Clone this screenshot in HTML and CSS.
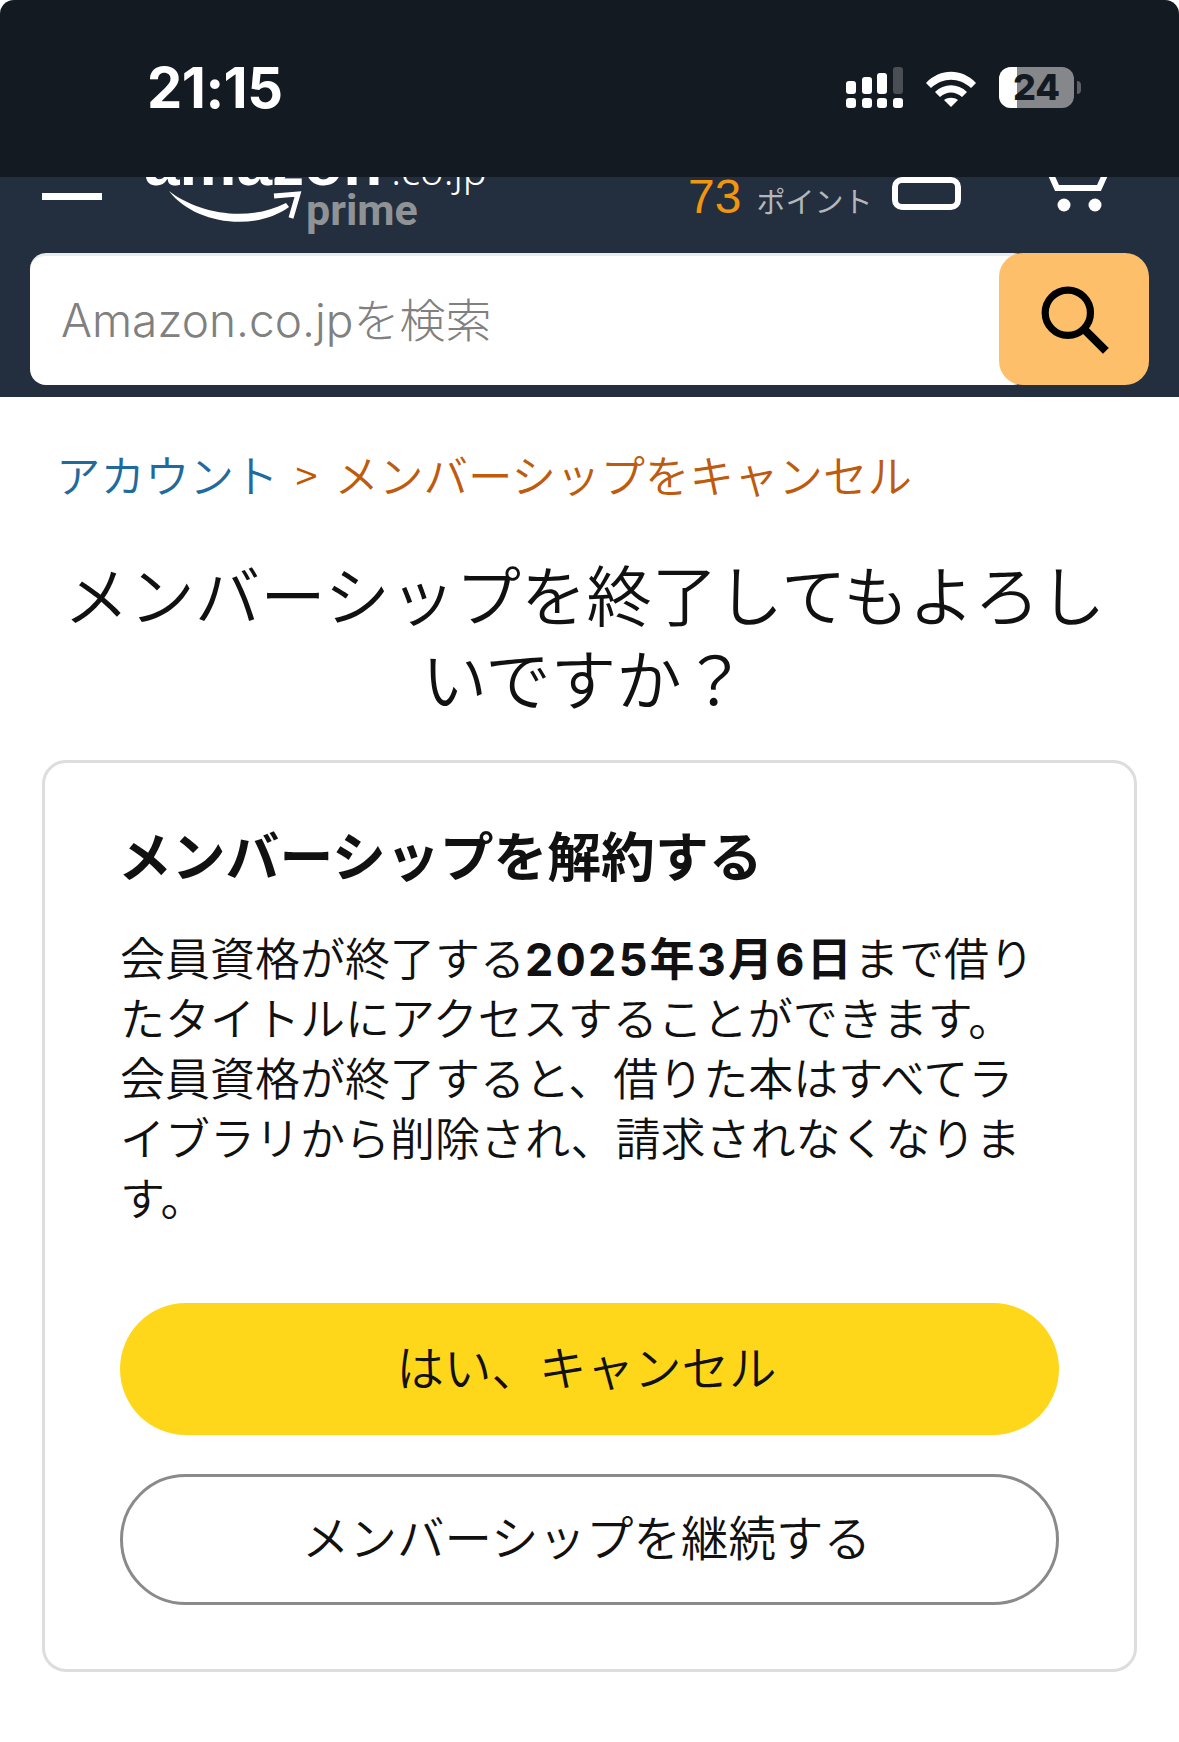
FILE: index.html
```html
<!DOCTYPE html>
<html lang="ja">
<head>
<meta charset="utf-8">
<title>メンバーシップを終了</title>
<link rel="stylesheet" href="styles.css">
</head>
<body>
<div class="status">
  <span class="time">21:15</span>
  <div class="status-icons">
    <svg class="signal" width="57" height="41" viewBox="0 0 57 41">
      <g fill="#fff">
        <rect x="0" y="14" width="10" height="13" rx="3"/><rect x="16" y="10" width="10" height="17" rx="3"/><rect x="31" y="6" width="10" height="21" rx="3"/>
        <rect x="0" y="31" width="10" height="10" rx="3"/><rect x="16" y="31" width="10" height="10" rx="3"/><rect x="31" y="31" width="10" height="10" rx="3"/><rect x="47" y="31" width="10" height="10" rx="3"/>
      </g>
      <rect x="47" y="0" width="10" height="27" rx="3" fill="#4a4e55"/>
    </svg>
    <svg class="wifi" width="50" height="36" viewBox="0 0 50 36">
      <path d="M0 12 C14 -3 36 -3 50 12 L45 17 C33 6 17 6 5 17 Z" fill="#fff"/>
      <path d="M9 21 C18 12 32 12 41 21 L36 26 C29 20 21 20 14 26 Z" fill="#fff"/>
      <path d="M18 29 C22 26 28 26 32 29 L25 36 Z" fill="#fff"/>
    </svg>
    <div class="battery">
      <div class="battery-body"><span class="battery-level"></span><span class="battery-text">24</span></div>
      <span class="battery-nub"></span>
    </div>
  </div>
</div>
<header class="nav">
  <div class="nav-top">
    <span class="burger"></span>
    <div class="logo">
      <div class="logo-word"><span class="logo-amazon">amazon</span><span class="logo-tld">.co.jp</span></div>
      <div class="logo-lower">
        <svg class="smile" width="133" height="36" viewBox="0 0 133 36">
          <path d="M0 2 C28 24 78 34 117 14 L120 18 C84 44 24 34 0 2 Z" fill="#fff"/>
          <path d="M105 7 L129 5 L122 29" fill="none" stroke="#fff" stroke-width="5"/>
        </svg>
        <span class="logo-prime">prime</span>
      </div>
    </div>
    <div class="points"><span class="points-num">73</span><span class="points-label">ポイント</span></div>
    <span class="device"></span>
    <svg class="cart" width="62" height="36" viewBox="0 0 62 36">
      <path d="M1 -8 L10 12 L52 12 L61 -8" fill="none" stroke="#fff" stroke-width="6"/>
      <circle cx="17" cy="29" r="6.5" fill="#fff"/><circle cx="48" cy="29" r="6.5" fill="#fff"/>
    </svg>
  </div>
  <div class="search">
    <div class="search-field"><span class="search-hint">Amazon.co.jpを検索</span></div>
    <div class="search-btn">
      <svg width="72" height="72" viewBox="0 0 70 70">
        <circle cx="29" cy="29" r="22" fill="none" stroke="#000" stroke-width="7"/>
        <path d="M45 45 L66 66" stroke="#000" stroke-width="8" fill="none"/>
      </svg>
    </div>
  </div>
</header>
<main class="page">
  <div class="crumbs"><span class="crumb-link">アカウント</span><span class="crumb-sep">&gt;</span><span class="crumb-now">メンバーシップをキャンセル</span></div>
  <h1 class="title">メンバーシップを終了してもよろしいですか？</h1>
  <section class="card">
    <h2 class="card-title">メンバーシップを解約する</h2>
    <p class="card-text">会員資格が終了する<b>2025年3月6日</b>まで借りたタイトルにアクセスすることができます。<br>会員資格が終了すると、借りた本はすべてライブラリから削除され、請求されなくなります。</p>
    <div class="actions">
      <div class="btn btn-yes">はい、キャンセル</div>
      <div class="btn btn-no">メンバーシップを継続する</div>
    </div>
  </section>
</main>
</body>
</html>
```
FILE: styles.css
```css
* { box-sizing: border-box; }
html, body { margin: 0; padding: 0; background: #fff; }
body { width: 1179px; height: 1742px; overflow: hidden; font-family: "Noto Sans CJK JP", "Noto Sans", sans-serif; color: #111; }

.status { height: 177px; background: #141a22; border-radius: 14px 14px 0 0; display: flex; justify-content: space-between; padding: 56px 98px 0 147px; }
.time { font-family: Inter, sans-serif; font-weight: 700; font-size: 56px; line-height: 64px; color: #fff; letter-spacing: -0.5px; }
.status-icons { display: flex; align-items: flex-start; height: 52px; padding-top: 11px; }
.signal { margin-right: 23px; }
.wifi { margin-top: 4px; margin-right: 23px; }
.battery { display: flex; align-items: center; }
.battery-body { position: relative; width: 75px; height: 41px; border-radius: 12px; background: #85878b; overflow: hidden; display: flex; align-items: center; justify-content: center; }
.battery-level { position: absolute; left: 0; top: 0; bottom: 0; width: 18px; background: #fff; }
.battery-text { position: relative; font-family: Inter, sans-serif; font-weight: 800; font-size: 36px; line-height: 41px; color: #141a22; }
.battery-nub { width: 4px; height: 13px; margin-left: 3px; background: #5d6065; border-radius: 0 4px 4px 0; }

.nav { height: 220px; background: #232e3f; overflow: hidden; }
.nav-top { height: 76px; display: flex; align-items: flex-start; padding-left: 42px; }
.burger { width: 60px; height: 7px; background: #fff; margin-top: 16px; flex: none; }
.logo { width: 544px; margin-left: 42px; flex: none; }
.logo-word { margin-top: -46px; height: 64px; display: flex; align-items: baseline; color: #fff; white-space: nowrap; }
.logo-amazon { font-family: "Liberation Sans", sans-serif; font-weight: 700; font-size: 64px; line-height: 64px; }
.logo-tld { font-family: "Noto Sans", sans-serif; font-weight: 300; font-size: 40px; line-height: 64px; margin-left: 9px; }
.logo-lower { display: flex; align-items: flex-start; margin-top: -6px; padding-left: 25px; }
.smile { flex: none; }
.logo-prime { font-family: Roboto, sans-serif; font-weight: 700; font-size: 43px; line-height: 42px; color: #909396; margin-left: 4px; letter-spacing: 0; }
.points { display: flex; align-items: baseline; margin-top: 0; flex: none; width: 204px; }
.points-num { font-family: "Liberation Sans", sans-serif; font-size: 48px; line-height: 44px; color: #f2950f; margin-top: -2px; }
.points-label { font-size: 29px; line-height: 44px; color: #b4b6ba; margin-left: 15px; }
.device { width: 69px; height: 33px; border: 6px solid #fff; border-radius: 10px; flex: none; }
.cart { margin-left: 86px; margin-top: -1px; flex: none; }

.search { margin: 0 30px; height: 132px; display: flex; }
.search-field { flex: 1; margin-right: -30px; background: #fff; border-top: 3px solid #e9ecef; border-radius: 16px; display: flex; align-items: center; }
.search-hint { padding: 0 0 8px 31px; font-family: Inter, "Noto Sans CJK JP", sans-serif; font-size: 46px; font-weight: 300; color: #808080; }
.search-btn { position: relative; width: 150px; height: 132px; background: #fdbf6a; border-radius: 24px; display: flex; align-items: center; justify-content: center; flex: none; }

.page { padding: 0 42px; }
.crumbs { display: flex; align-items: center; height: 60px; margin: 47px 0 0 14px; font-size: 44.5px; line-height: 60px; white-space: nowrap; font-weight: 350; }
.crumb-link { color: #1f6a9f; }
.crumb-sep { color: #c45500; margin: 0 17px; font-size: 40px; }
.crumb-now { color: #bd5b0e; }
.title { margin: 47px 0 0; padding-right: 10px; font-size: 65.5px; line-height: 84px; font-weight: 350; text-align: center; color: #111; }
.card { margin-top: 41px; height: 912px; border: 3px solid #dcdddd; border-radius: 24px; padding: 0 75px; }
.card-title { margin: 56px 0 0 -2px; font-size: 53.8px; line-height: 70px; font-weight: 700; color: #111; }
.card-text { margin: 38px 0 0; padding-right: 20px; font-size: 45px; line-height: 60px; font-weight: 350; color: #111; }
.card-text b { font-family: Inter, "Noto Sans CJK JP", sans-serif; font-weight: 700; letter-spacing: 2.2px; line-height: 1; }
.actions { margin-top: 76px; display: flex; flex-direction: column; gap: 39px; }
.btn { height: 132px; padding: 0 6px 8px 0; border-radius: 66px; display: flex; align-items: center; justify-content: center; font-size: 47.5px; font-weight: 350; color: #111; }
.btn-yes { background: #fed71a; }
.btn-no { height: 131px; border: 3px solid #8a8a8a; background: #fff; }
```
